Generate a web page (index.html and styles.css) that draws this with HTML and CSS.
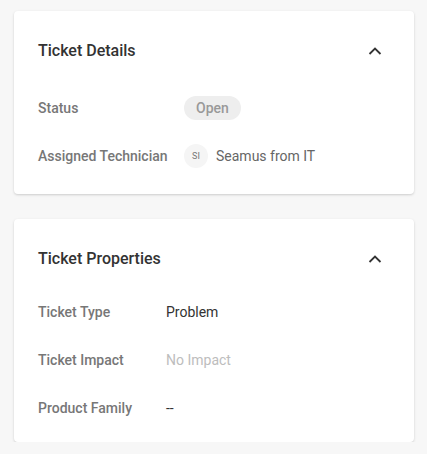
FILE: index.html
```html
<!DOCTYPE html>
<html>
<head>
<meta charset="utf-8">
<link rel="stylesheet" href="styles.css">
</head>
<body>
<div class="page">
  <section class="card">
    <header class="card-header">
      <h2 class="card-title">Ticket Details</h2>
      <svg class="chevron" width="14" height="14" viewBox="0 0 14 14"><path d="M1.5 10 L7 4.5 L12.5 10" fill="none" stroke="#333" stroke-width="1.8"/></svg>
    </header>
    <div class="card-body card-body--details">
      <div class="row">
        <div class="label">Status</div>
        <div class="value"><span class="pill">Open</span></div>
      </div>
      <div class="row">
        <div class="label">Assigned Technician</div>
        <div class="value tech"><span class="avatar">SI</span><span class="tech-name">Seamus from IT</span></div>
      </div>
    </div>
  </section>
  <section class="card">
    <header class="card-header">
      <h2 class="card-title">Ticket Properties</h2>
      <svg class="chevron" width="14" height="14" viewBox="0 0 14 14"><path d="M1.5 10 L7 4.5 L12.5 10" fill="none" stroke="#333" stroke-width="1.8"/></svg>
    </header>
    <div class="card-body card-body--props">
      <div class="row">
        <div class="label">Ticket Type</div>
        <div class="value">Problem</div>
      </div>
      <div class="row">
        <div class="label">Ticket Impact</div>
        <div class="value muted">No Impact</div>
      </div>
      <div class="row">
        <div class="label">Product Family</div>
        <div class="value">--</div>
      </div>
    </div>
  </section>
</div>
</body>
</html>
```
FILE: styles.css
```css
html, body {
  margin: 0;
  padding: 0;
  background: #f7f7f7;
  font-family: Roboto, "Liberation Sans", Arial, sans-serif;
}
.page {
  display: flex;
  flex-direction: column;
  gap: 25px;
  padding: 11px 13px 0 14px;
}
.card {
  background: #fff;
  border-radius: 4px;
  box-shadow: 0 1px 3px rgba(0,0,0,0.12), 0 1px 2px rgba(0,0,0,0.06);
  padding: 0 24px;
}
.card-header {
  display: flex;
  align-items: center;
  justify-content: space-between;
  height: 22px;
  padding-top: 29px;
}
.card-title {
  margin: 0;
  font-size: 16px;
  font-weight: 500;
  color: #333;
  line-height: 22px;
}
.chevron {
  margin-right: 8px;
}
.card-body--details {
  padding: 22px 0 14px;
}
.card-body--props {
  padding: 18px 0 10px;
}
.row {
  display: flex;
  align-items: center;
  height: 48px;
}
.label {
  font-size: 14px;
  font-weight: 500;
  color: #777;
}
.card-body--details .label { width: 146px; }
.card-body--props .label { width: 128px; }
.value {
  font-size: 14px;
  color: #333;
}
.muted { color: #bdbdbd; }
.pill {
  display: inline-block;
  background: #eeeeee;
  color: #999;
  font-weight: 500;
  border-radius: 12px;
  height: 24px;
  line-height: 24px;
  padding: 0 12px;
}
.tech {
  display: flex;
  align-items: center;
  gap: 8px;
}
.avatar {
  width: 24px;
  height: 24px;
  border-radius: 50%;
  background: #f5f5f5;
  color: #777;
  font-size: 9px;
  display: flex;
  align-items: center;
  justify-content: center;
}
.tech-name {
  color: #666;
}
```
